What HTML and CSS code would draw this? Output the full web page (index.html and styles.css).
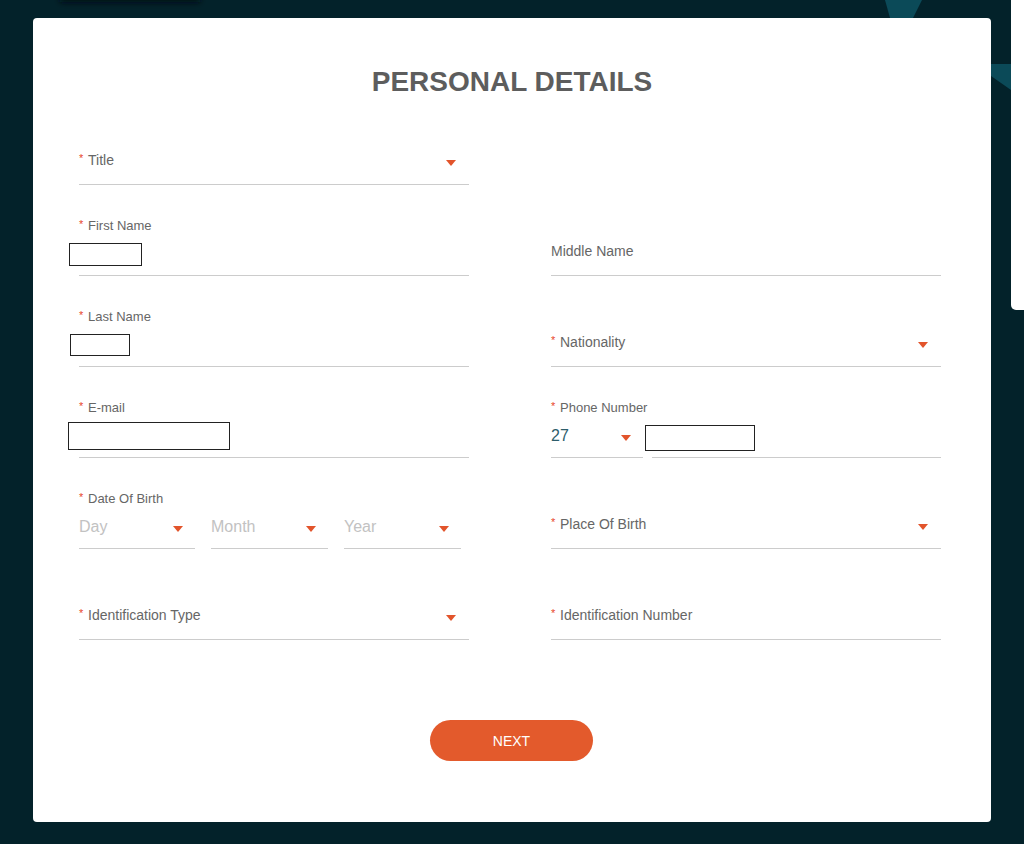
FILE: index.html
```html
<!DOCTYPE html>
<html lang="en">
<head>
<meta charset="utf-8">
<title>Personal Details</title>
<link rel="stylesheet" href="styles.css">
</head>
<body>
<svg class="bg-deco" width="1024" height="844" viewBox="0 0 1024 844" aria-hidden="true">
  <defs>
    <filter id="blur" x="-20%" y="-200%" width="140%" height="500%">
      <feGaussianBlur stdDeviation="3"/>
    </filter>
  </defs>
  <rect x="60" y="-8" width="140" height="10" fill="#000e12" filter="url(#blur)"/>
  <polygon points="885,0 922,0 913,18 890,18" fill="#0b4a58"/>
  <polygon points="991,64 1011,64 1011,90 991,76" fill="#0b4a58"/>
</svg>
<div class="side-panel"></div>
<main class="card">
  <h1 class="title">PERSONAL DETAILS</h1>
  <form class="grid">
    <div class="field sel">
      <span class="ph"><span class="req">*</span>Title</span>
      <span class="caret"></span>
    </div>
    <div class="empty"></div>

    <div class="field stack">
      <label class="lbl"><span class="req">*</span>First Name</label>
      <div class="inrow"><input class="box w-first" type="text"></div>
    </div>
    <div class="field sel">
      <span class="ph">Middle Name</span>
    </div>

    <div class="field stack">
      <label class="lbl"><span class="req">*</span>Last Name</label>
      <div class="inrow"><input class="box w-last" type="text"></div>
    </div>
    <div class="field sel">
      <span class="ph"><span class="req">*</span>Nationality</span>
      <span class="caret"></span>
    </div>

    <div class="field stack">
      <label class="lbl"><span class="req">*</span>E-mail</label>
      <div class="inrow"><input class="box w-email" type="text"></div>
    </div>
    <div class="field stack noline">
      <label class="lbl"><span class="req">*</span>Phone Number</label>
      <div class="subrow">
        <div class="sub code"><span class="val">27</span><span class="caret"></span></div>
        <div class="sub num"><input class="box w-phone" type="text"></div>
      </div>
    </div>

    <div class="field stack noline">
      <label class="lbl"><span class="req">*</span>Date Of Birth</label>
      <div class="subrow dob">
        <div class="sub d1"><span class="pl">Day</span><span class="caret"></span></div>
        <div class="sub d2"><span class="pl">Month</span><span class="caret"></span></div>
        <div class="sub d3"><span class="pl">Year</span><span class="caret"></span></div>
      </div>
    </div>
    <div class="field sel">
      <span class="ph"><span class="req">*</span>Place Of Birth</span>
      <span class="caret"></span>
    </div>

    <div class="field sel">
      <span class="ph"><span class="req">*</span>Identification Type</span>
      <span class="caret"></span>
    </div>
    <div class="field sel">
      <span class="ph"><span class="req">*</span>Identification Number</span>
    </div>
  </form>
  <div class="actions">
    <button class="next" type="button">NEXT</button>
  </div>
</main>
</body>
</html>
```
FILE: styles.css
```css
* { box-sizing: border-box; }
html, body { margin: 0; padding: 0; }
body {
  background: #03222a;
  font-family: "Liberation Sans", Arial, sans-serif;
  width: 1024px;
  height: 844px;
  overflow: hidden;
  position: relative;
  padding: 18px 0 0 33px;
}
.bg-deco {
  position: absolute;
  left: 0;
  top: 0;
  z-index: 0;
}
.side-panel {
  position: absolute;
  top: 0;
  right: 0;
  width: 13px;
  height: 310px;
  background: #fff;
  border-bottom-left-radius: 5px;
  z-index: 1;
}
.card {
  position: relative;
  z-index: 1;
  width: 958px;
  height: 804px;
  background: #fff;
  border-radius: 4px;
  padding: 52px 50px 0 46px;
}
.title {
  margin: 0;
  text-align: center;
  font-size: 28px;
  line-height: 24px;
  font-weight: bold;
  color: #5d5d5d;
  padding-left: 4px;
}
.grid {
  display: grid;
  grid-template-columns: 390px 390px;
  grid-auto-rows: 91px;
  column-gap: 82px;
  margin: 0;
}
.field {
  display: flex;
  border-bottom: 1px solid #cccccc;
  height: 91px;
}
.field.noline { border-bottom: none; }
.sel {
  align-items: flex-end;
  justify-content: space-between;
}
.sel .ph {
  height: 49px;
  display: flex;
  align-items: center;
  font-size: 14px;
  color: #666;
}
.sel .caret {
  margin-bottom: 18px;
  margin-right: 13px;
}
.req {
  display: inline-block;
  width: 9px;
  color: #e8452c;
  font-size: 11px;
  position: relative;
  top: -2px;
}
.stack {
  flex-direction: column;
  justify-content: flex-end;
}
.lbl {
  font-size: 13px;
  line-height: 16px;
  color: #666;
  margin-bottom: 1px;
}
.inrow {
  height: 40px;
  padding-bottom: 2px;
  display: flex;
  align-items: center;
}
.box {
  border: 1px solid #222;
  border-radius: 0;
  padding: 0;
  margin: 0;
  background: #fff;
  font: inherit;
  outline: none;
}
.w-first { width: 73px; height: 23px; margin-left: -10px; margin-top: 1px; }
.w-last { width: 60px; height: 22px; margin-left: -9px; }
.w-email { width: 162px; height: 28px; margin-left: -11px; }
.w-phone { width: 110px; height: 26px; margin-left: -7px; margin-top: 3px; }
.subrow {
  display: flex;
  height: 41px;
}
.sub {
  height: 41px;
  border-bottom: 1px solid #cccccc;
  display: flex;
  align-items: center;
  justify-content: space-between;
  padding-bottom: 2px;
}
.code { width: 92px; }
.num { flex: 1; margin-left: 9px; justify-content: flex-start; }
.val {
  font-size: 16px;
  color: #2d5d6b;
}
.dob { gap: 16px; }
.d1 { width: 116px; }
.d2 { width: 117px; }
.d3 { width: 117px; }
.pl {
  font-size: 16px;
  color: #c2c2c2;
}
.sub .caret { margin-right: 12px; margin-top: 3px; }
.caret {
  width: 0;
  height: 0;
  border-left: 5.5px solid transparent;
  border-right: 5.5px solid transparent;
  border-top: 6px solid #e2542b;
  flex: none;
}
.actions {
  display: flex;
  justify-content: center;
  margin-top: 80px;
}
.next {
  width: 163px;
  height: 41px;
  border: none;
  border-radius: 21px;
  background: #e35a2c;
  color: #fff;
  font-family: "Liberation Sans", Arial, sans-serif;
  font-size: 14px;
  cursor: pointer;
  margin-left: 3px;
}
```
